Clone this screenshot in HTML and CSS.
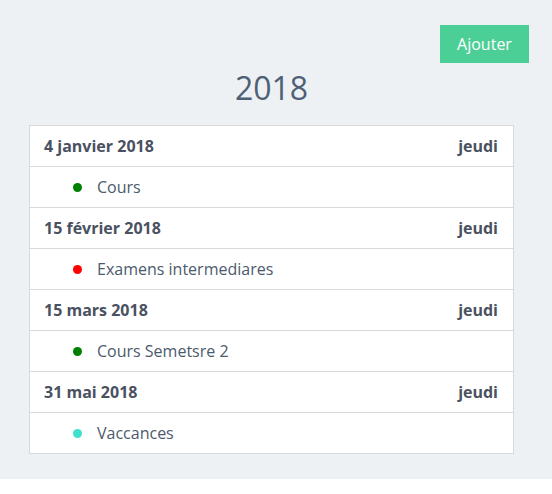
FILE: index.html
```html
<!DOCTYPE html>
<html lang="fr">
<head>
<meta charset="utf-8">
<link rel="stylesheet" href="styles.css">
</head>
<body>
<div class="page">
  <div class="toolbar">
    <button class="btn-add">Ajouter</button>
  </div>
  <h1 class="year">2018</h1>
  <ul class="agenda">
    <li class="day"><span>4 janvier 2018</span><span>jeudi</span></li>
    <li class="event"><span class="dot green"></span>Cours</li>
    <li class="day"><span>15 février 2018</span><span>jeudi</span></li>
    <li class="event"><span class="dot red"></span>Examens intermediares</li>
    <li class="day"><span>15 mars 2018</span><span>jeudi</span></li>
    <li class="event"><span class="dot green"></span>Cours Semetsre 2</li>
    <li class="day"><span>31 mai 2018</span><span>jeudi</span></li>
    <li class="event"><span class="dot turquoise"></span>Vaccances</li>
  </ul>
</div>
</body>
</html>
```

FILE: styles.css
```css
html, body {
  margin: 0;
  padding: 0;
  background: #ffffff;
}
body {
  font-family: "Open Sans", "Liberation Sans", sans-serif;
  color: #4a5568;
}
.page {
  background: #eef1f4;
  height: 479px;
  box-sizing: border-box;
  padding: 25px 38px 0 29px;
}
.toolbar {
  display: flex;
  justify-content: flex-end;
  margin-right: -15px;
}
.btn-add {
  background: #4ccf97;
  color: #ffffff;
  border: 0;
  border-radius: 0;
  font-family: "Open Sans", sans-serif;
  font-size: 16px;
  width: 89px;
  height: 38px;
  padding: 0;
}
.year {
  margin: 0;
  text-align: center;
  font-weight: 400;
  font-size: 32px;
  line-height: 44px;
  color: #4e6075;
  margin-top: 3px;
  margin-bottom: 15px;
}
.agenda {
  list-style: none;
  margin: 0;
  padding: 0;
  background: #ffffff;
  border: 1px solid #d9d9d9;
}
.agenda li {
  height: 41px;
  box-sizing: border-box;
  display: flex;
  align-items: center;
  font-size: 16px;
  border-top: 1px solid #d9d9d9;
}
.agenda li:first-child {
  height: 40px;
  border-top: 0;
}
.agenda li.day {
  justify-content: space-between;
  padding: 0 15px 0 14px;
  font-weight: 700;
  font-size: 16px;
  color: #4a5160;
}
.agenda li.event {
  padding-left: 43px;
  color: #4b5a6c;
}
.dot {
  width: 9px;
  height: 9px;
  border-radius: 50%;
  margin-right: 15px;
  flex: none;
}
.green { background: #008000; }
.red { background: #ff0000; }
.turquoise { background: #40e0d0; }
```
